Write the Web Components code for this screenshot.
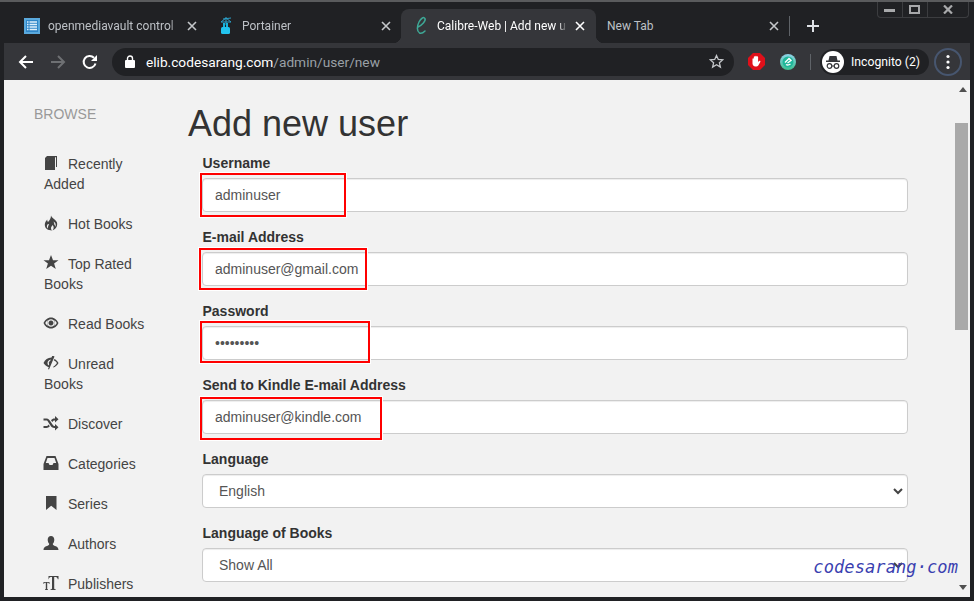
<!DOCTYPE html>
<html>
<head>
<meta charset="utf-8">
<title>Calibre-Web | Add new user</title>
<style>
  html, body { margin: 0; padding: 0; background: #202124; }
  body { width: 974px; height: 601px; overflow: hidden; font-family: "Liberation Sans", Arial, sans-serif; }
</style>
</head>
<body>
<browser-window>
  <browser-tab slot="tabs" title="openmediavault control" icon="omv"></browser-tab>
  <browser-tab slot="tabs" title="Portainer" icon="portainer"></browser-tab>
  <browser-tab slot="tabs" title="Calibre-Web | Add new u" icon="calibre" active></browser-tab>
  <browser-tab slot="tabs" title="New Tab"></browser-tab>

  <side-nav>
    <nav-item icon="book">Recently Added</nav-item>
    <nav-item icon="fire">Hot Books</nav-item>
    <nav-item icon="star">Top Rated Books</nav-item>
    <nav-item icon="eye">Read Books</nav-item>
    <nav-item icon="eyeoff">Unread Books</nav-item>
    <nav-item icon="random">Discover</nav-item>
    <nav-item icon="inbox">Categories</nav-item>
    <nav-item icon="bookmark">Series</nav-item>
    <nav-item icon="user">Authors</nav-item>
    <nav-item icon="textsize">Publishers</nav-item>
  </side-nav>

  <user-form>
    <form-field label="Username" value="adminuser" mark="-2,-5,146,44"></form-field>
    <form-field label="E-mail Address" value="adminuser@gmail.com" mark="-3,-4,168,42"></form-field>
    <form-field label="Password" value="•••••••••" mark="-2,-5,170,42"></form-field>
    <form-field label="Send to Kindle E-mail Address" value="adminuser@kindle.com" mark="-2,-3,182,43"></form-field>
    <form-field label="Language" value="English" select></form-field>
    <form-field label="Language of Books" value="Show All" select></form-field>
  </user-form>
</browser-window>

<script>
const ICONS = {
  book: '<path d="M1 2 3 0h10v11h-1V1.2h-1V14H1z"/>',
  fire: '<path fill-rule="evenodd" d="M7 -.5c.5 2 4 3.500 5.800 6.500 1.200 3.500-.5 7-4.300 8.500 1.300-1.500 1.700-3.500.2-5.500-.7 1-1.700 2-1.700 3.200 0 1 .4 1.800 1 2.300C4 14.500.8 12.500.8 8.800.8 6.500 2 5 3.200 3.500c0 1 .3 2 .8 2.500C5.500 4.500 7 2.500 7 -.5zM4 8C3 9 2.700 10 3 11c.2.700.6 1.200 1 1.500C3.800 11 4.200 9.500 5.200 8.500 4.700 8.500 4.300 8.300 4 8zM9.500 5.500c.5 1 .8 2 .8 3 .7.800 1 1.500 1.200 2.200.3-1.200.2-2.700-.3-3.700-.4-.600-1-1.100-1.700-1.500z"/>',
  star: '<path d="M7 -1l2 5.200h5.500l-4.400 3.300 1.700 5.500L7 9.700 2.200 13l1.700-5.500L-.5 4.200H5z"/>',
  eye: '<path fill-rule="evenodd" d="M7 1.500c3.500 0 6.200 2.500 7.500 5.500-1.300 3-4 5.500-7.500 5.500S.8 10-.5 7C.8 4 3.500 1.500 7 1.500zM7 3.200C5 3.200 3.200 4.800 3.200 7S5 10.800 7 10.800 10.800 9.200 10.800 7 9 3.200 7 3.200zM1.200 7C2 8.300 2.800 9.300 3.800 10 2.800 8 2.800 6 3.800 4 2.800 4.700 2 5.700 1.200 7zM10.200 4c1 2 1 4 0 6 1-.7 1.800-1.700 2.600-3-.8-1.300-1.600-2.300-2.600-3zM7 4.500a2.500 2.500 0 1 1-.01 0z"/>',
  eyeoff: '<path d="M9.500 0l1 .6L5 13.500l-1-.6.8-1.700C2.500 10.300.6 8.800-.5 7 1 4 3.700 1.700 7.500 1.600L8.200 0zM6.800 3.400C5 3.700 3.500 5.200 3.500 7c0 1 .4 1.900 1.100 2.500l.6-1.400C5 7.700 4.800 7.300 4.800 7c0-1 .7-1.800 1.300-2zM10.500 3c1.800.8 3 2.300 4 4-1 1.800-3 4-5.500 4.600l.7-1.400c1.400-.6 2.500-1.900 3.200-3.200-.6-1-1.400-2-3.200-2.800z"/>',
  random: '<path d="M-.5 2.500h3c2 0 3 1.500 4 3l2 3c.6.9 1.200 1.500 2 1.500h.5V8l3.500 3.300L11 14.500V12h-.7c-1.800 0-3-1-4-2.700l-2-3C3.700 5 3.300 4.500 2.500 4.500h-3zM11 0l3.500 3.200L11 6.500V4.500h-.7c-.8 0-1.300.6-2 1.600L7 4.200C8 3 9 2.500 10.300 2.500h.7zM-.5 10h3c.8 0 1.300-.6 2-1.600L5.800 10.300C4.800 11.400 3.800 12 2.500 12h-3z"/>',
  inbox: '<path fill-rule="evenodd" d="M2.500 0h9L14.500 8v6H-.5V8zM3.500 2 1.800 7H4.500l1 2h3l1-2h2.700L10.500 2z"/>',
  bookmark: '<path d="M2 0h10.500v14L7.200 9.800 2 14z"/>',
  user: '<path d="M7 0c2 0 3.300 1.600 3.300 3.800 0 1.500-.5 3-1.500 4 0 1 .5 1.500 1.500 2 2 .7 4 1 4.200 4.200H-.5C-.3 10.800 1.700 10.500 3.700 9.800c1-.5 1.500-1 1.500-2-1-1-1.500-2.500-1.500-4C3.700 1.600 5 0 7 0z"/>',
  textsize: '<path d="M4.500 0h10v3.200h-.8C13.500 2 13 1 11.700 1h-1.500v11.500c0 .5.500.7 1.500.7v.8H6.500v-.8c1 0 1.500-.2 1.500-.7V1H6.800C5.500 1 5 2 4.800 3.200H4.500zM-.5 6h6v2h-.5c-.1-.6-.4-1.200-1-1.200H3.200V13c0 .2.200.3.800.3v.7H1v-.7c.6 0 .8-.1.800-.3V6.800H1c-.6 0-.9.600-1 1.200h-.5z"/>'
};

const FAVICONS = {
  omv: `<svg width="16" height="16" viewBox="0 0 16 16"><rect width="16" height="16" fill="#5aa9dd"/><rect x="2" y="2" width="12" height="12" fill="#2f86c8"/><path d="M3 4h10M3 6.500h10M3 9h10M3 11.500h10" stroke="#dff0fb" stroke-width="1.500"/><path d="M5 3v10" stroke="#2f86c8"/></svg>`,
  portainer: `<svg width="16" height="18" viewBox="0 0 16 18"><path d="M8 0v8M5 2 13 1M3 5 8 1l5 4M3 5h10" stroke="#2b9fc7" stroke-width="1" fill="none"/><rect x="5" y="6" width="2" height="4" fill="#17b3dd"/><rect x="8" y="6" width="2" height="4" fill="#17b3dd"/><rect x="3" y="10" width="9" height="7" rx="1.500" fill="#22c3ee"/></svg>`,
  calibre: `<svg width="16" height="20" viewBox="0 0 16 20"><path d="M5 11C9 9 13 5 12 2.500 11 .5 8 2 6 6c-2 4-2.500 9 .5 11 2 1 4-.5 5.500-2" fill="none" stroke="#3ea896" stroke-width="1.500" stroke-linecap="round"/></svg>`
};

class UiIcon extends HTMLElement {
  constructor() {
    super();
    this.shadowDOM = this.attachShadow({ mode: 'open' });
  }

  connectedCallback() {
    this.shadowDOM.innerHTML = `
      <style>
        :host{ display:inline-block; width:14px; height:14px; margin-right:10px; vertical-align:-1px; }
        svg{ display:block; overflow:visible; fill:#444; }
      </style>
      <svg width="14" height="14" viewBox="0 0 14 14">${ICONS[this.getAttribute('name')]}</svg>`;
  }
}
customElements.define('ui-icon', UiIcon);

class BrowserTab extends HTMLElement {
  constructor() {
    super();
    this.shadowDOM = this.attachShadow({ mode: 'open' });
  }

  connectedCallback() {
    const icon = FAVICONS[this.getAttribute('icon')];
    this.shadowDOM.innerHTML = `
      <style>
        :host{
          display:flex;
          align-items:center;
          box-sizing:border-box;
          flex:0 0 194px;
          min-width:0;
          height:34px;
          padding:0 9px 0 10px;
          position:relative;
          color:#bdc1c6;
          font:12px Roboto, "Noto Sans", sans-serif;
        }
        :host([active]){
          background:#35363a;
          border-radius:8px 8px 0 0;
          color:#fff;
          margin-left:-1px;
          flex-basis:195px;
          padding-left:12px;
        }
        :host([active])::before, :host([active])::after{
          content:"";
          position:absolute;
          bottom:0;
          width:8px;
          height:8px;
        }
        :host([active])::before{ left:-8px; background:radial-gradient(circle at 0 0, transparent 8px, #35363a 8.500px); }
        :host([active])::after{ right:-8px; background:radial-gradient(circle at 100% 0, transparent 8px, #35363a 8.500px); }
        .fav{ flex:0 0 16px; height:16px; margin-right:8px; display:flex; align-items:center; justify-content:center; }
        .fav.none{ display:none; }
        .title{
          flex:1;
          min-width:0;
          white-space:nowrap;
          -webkit-mask-image:linear-gradient(to right, #000 calc(100% - 9px), transparent);
        }
        :host(:not([icon])) .title{ padding-left:1px; -webkit-mask-image:none; }
        .close{ flex:0 0 14px; margin-left:6px; }
      </style>
      <div class="fav ${icon ? '' : 'none'}">${icon || ''}</div>
      <div class="title">${this.getAttribute('title')}</div>
      <svg class="close" width="14" height="14" viewBox="0 0 14 14"><path d="M3 3l8 8M11 3l-8 8" stroke="${this.hasAttribute('active') ? '#fff' : '#c4c7ca'}" stroke-width="1.600"/></svg>`;
  }
}
customElements.define('browser-tab', BrowserTab);

class BrowserWindow extends HTMLElement {
  constructor() {
    super();
    this.shadowDOM = this.attachShadow({ mode: 'open' });
  }

  connectedCallback() {
    this.shadowDOM.innerHTML = `
      <style>
        :host{
          display:flex;
          flex-direction:column;
          width:974px;
          height:601px;
          box-sizing:border-box;
          background:#202124;
          border-top:2px solid #5a5b5d;
          position:relative;
        }
        .strip{ flex:0 0 41px; display:flex; align-items:flex-end; padding-left:14px; position:relative; }
        .sep{ flex:0 0 1px; height:20px; background:#5f6368; margin:0 0 7px -1px; }
        .sep.first{ position:absolute; left:207px; bottom:0; margin:0 0 7px 0; }
        .plus{ margin:0 0 9px 15px; }
        .controls{
          position:absolute;
          top:0;
          right:5px;
          width:92px;
          height:16px;
          display:flex;
          border:1px solid #3c3d40;
          border-top:0;
          border-radius:0 0 4px 4px;
          box-sizing:border-box;
        }
        .controls div{ display:flex; align-items:center; justify-content:center; border-right:1px solid #3c3d40; width:22px; padding-right:2px; }
        .controls div:last-child{ border-right:0; flex:1; padding:0; }
        .toolbar{
          flex:0 0 37px;
          display:flex;
          align-items:center;
          background:#35363a;
          margin:0 4px;
          padding-left:6px;
        }
        .btn{ flex:0 0 32px; height:32px; display:flex; align-items:center; justify-content:center; }
        .omni{
          flex:0 0 622px;
          height:28px;
          box-sizing:border-box;
          margin:0 6px;
          padding:0 10px 0 13px;
          border-radius:14px;
          background:#202124;
          display:flex;
          align-items:center;
          color:#fff;
          font:13.700px Roboto, "Noto Sans", sans-serif;
        }
        .omni .lock{ margin-right:11px; }
        .omni .url{ flex:1; white-space:nowrap; }
        .omni .url span{ color:#9aa0a6; }
        .vsep{ flex:0 0 1px; height:16px; background:#5f6368; margin:0 9px 0 6px; }
        .pill{
          flex:0 0 109px;
          height:26px;
          box-sizing:border-box;
          border-radius:13px;
          background:#202124;
          display:flex;
          align-items:center;
          padding-left:2px;
          color:#fff;
          font:12.200px Roboto, "Noto Sans", sans-serif;
          white-space:nowrap;
        }
        .pill svg{ margin-right:7px; }
        .menu{
          flex:0 0 28px;
          height:28px;
          box-sizing:border-box;
          margin-left:5px;
          border:2px solid #47566f;
          border-radius:50%;
          display:flex;
          align-items:center;
          justify-content:center;
        }
        .page{
          flex:1;
          min-height:0;
          display:flex;
          background:#f2f2f2;
          margin:0 4px 4px 4px;
          position:relative;
          overflow:hidden;
        }
        .bar{ flex:0 0 15px; position:relative; display:flex; flex-direction:column; align-items:center; }
        .up{ margin-top:7px; width:0; height:0; border:4px solid transparent; border-top:0; border-bottom:5px solid #505050; }
        .thumb{ align-self:flex-start; margin-top:31px; width:13px; height:207px; background:#a9a9a9; }
        .down{ margin-top:auto; margin-bottom:7px; width:0; height:0; border:4px solid transparent; border-bottom:0; border-top:5px solid #505050; }
        .mark{
          position:absolute;
          right:12px;
          bottom:20px;
          color:#3a3fb0;
          font:italic 17px "DejaVu Sans Mono", monospace;
          letter-spacing:.1px;
          white-space:nowrap;
        }
      </style>
      <div class="strip">
        <slot name="tabs"></slot>
        <div class="sep first"></div>
        <div class="sep"></div>
        <svg class="plus" width="16" height="16" viewBox="0 0 16 16"><path d="M8 2v12M2 8h12" stroke="#dee1e6" stroke-width="2"/></svg>
        <div class="controls">
          <div><svg width="11" height="4"><rect width="11" height="3" y="1" fill="#a8a9ab"/></svg></div>
          <div><svg width="11" height="9"><rect x="1" y="1" width="9" height="7" fill="none" stroke="#a8a9ab" stroke-width="2"/></svg></div>
          <div><svg width="10" height="9" viewBox="0 0 10 9"><path d="M1 .5l8 8M9 .5l-8 8" stroke="#a8a9ab" stroke-width="2.200"/></svg></div>
        </div>
      </div>
      <div class="toolbar">
        <div class="btn"><svg width="16" height="16" viewBox="0 0 16 16"><path d="M15 8H2M8 2 2 8l6 6" fill="none" stroke="#fff" stroke-width="2"/></svg></div>
        <div class="btn"><svg width="16" height="16" viewBox="0 0 16 16"><path d="M1 8h13M8 2l6 6-6 6" fill="none" stroke="#6e7073" stroke-width="2"/></svg></div>
        <div class="btn"><svg width="16" height="16" viewBox="0 0 16 16"><path d="M13.500 9.500A6 6 0 1 1 12 3.700" fill="none" stroke="#fff" stroke-width="2"/><path d="M15 1v6H9z" fill="#fff"/></svg></div>
        <div class="omni">
          <svg class="lock" width="10" height="13" viewBox="0 0 10 13"><path d="M2.500 5V3.500a2.500 2.500 0 0 1 5 0V5" fill="none" stroke="#fff" stroke-width="1.400"/><rect y="5" width="10" height="8" rx="1" fill="#fff"/></svg>
          <div class="url">elib.codesarang.com<span>/admin/user/new</span></div>
          <svg width="15" height="15" viewBox="0 0 15 15"><path d="M7.500 1.500l1.800 4 4.400.4-3.300 2.900 1 4.300-3.900-2.300-3.900 2.300 1-4.300L1.300 5.900l4.400-.4z" fill="none" stroke="#c4c7ca" stroke-width="1.300"/></svg>
        </div>
        <div class="btn"><svg width="17" height="17" viewBox="0 0 17 17"><path d="M5 0h7l5 5v7l-5 5H5l-5-5V5z" fill="#e0101a"/><path d="M4.500 9V6c0-1 1.300-1 1.300 0V4c0-1 1.400-1 1.400 0v-.5c0-1 1.500-1 1.500 0V4c0-1 1.400-1 1.400 0v5l1-1c.8-.6 1.700.2 1.200 1l-2 3.500c-.5.700-1.200 1-2 1H7.500c-2 0-3-1.500-3-3z" fill="#fff"/></svg></div>
        <div class="btn"><svg width="16" height="16" viewBox="0 0 16 16"><defs><linearGradient id="g" x1="0" y1="0" x2="0" y2="1"><stop offset="0" stop-color="#8fd3e8"/><stop offset="1" stop-color="#3dbf8f"/></linearGradient></defs><circle cx="8" cy="8" r="8" fill="url(#g)"/><circle cx="8" cy="8" r="5.500" fill="#1fb79a"/><path d="M5 8.500 9 4.500l2 2-3.500 2.500M6 10.500c1.500 1 3 .5 4.500-.5" fill="none" stroke="#fff" stroke-width="1.400"/></svg></div>
        <div class="vsep"></div>
        <div class="pill">
          <svg width="22" height="22" viewBox="0 0 22 22"><circle cx="11" cy="11" r="11" fill="#fff"/><path d="M7.500 5h7l1 4.500h2.500V11H4V9.500h2.500z" fill="#35363a"/><circle cx="7.500" cy="15" r="2.300" fill="none" stroke="#35363a" stroke-width="1.200"/><circle cx="14.500" cy="15" r="2.300" fill="none" stroke="#35363a" stroke-width="1.200"/><path d="M9.800 15h2.400" stroke="#35363a"/></svg>
          Incognito (2)
        </div>
        <div class="menu"><svg width="4" height="16" viewBox="0 0 4 16"><circle cx="2" cy="2.500" r="1.600" fill="#fff"/><circle cx="2" cy="8" r="1.600" fill="#fff"/><circle cx="2" cy="13.500" r="1.600" fill="#fff"/></svg></div>
      </div>
      <div class="page">
        <slot></slot>
        <div class="bar"><div class="up"></div><div class="thumb"></div><div class="down"></div></div>
        <div class="mark">codesarang·com</div>
      </div>`;
  }
}
customElements.define('browser-window', BrowserWindow);

class SideNav extends HTMLElement {
  constructor() {
    super();
    this.shadowDOM = this.attachShadow({ mode: 'open' });
  }

  connectedCallback() {
    this.shadowDOM.innerHTML = `
      <style>
        :host{
          display:block;
          flex:0 0 184px;
          box-sizing:border-box;
          padding:24px 0 0 30px;
        }
        h2{
          margin:0 0 30px;
          font:14px/20px "Liberation Sans", Arial, sans-serif;
          color:#999;
        }
        .list{ display:flex; flex-direction:column; gap:20px; margin-left:10px; width:106px; }
      </style>
      <h2>BROWSE</h2>
      <div class="list"><slot></slot></div>`;
  }
}
customElements.define('side-nav', SideNav);

class NavItem extends HTMLElement {
  constructor() {
    super();
    this.shadowDOM = this.attachShadow({ mode: 'open' });
  }

  connectedCallback() {
    this.shadowDOM.innerHTML = `
      <style>
        :host{
          display:block;
          font:14px/20px "Liberation Sans", Arial, sans-serif;
          color:#444;
        }
      </style>
      <ui-icon name="${this.getAttribute('icon')}"></ui-icon><slot></slot>`;
  }
}
customElements.define('nav-item', NavItem);

class UserForm extends HTMLElement {
  constructor() {
    super();
    this.shadowDOM = this.attachShadow({ mode: 'open' });
  }

  connectedCallback() {
    this.shadowDOM.innerHTML = `
      <style>
        :host{
          display:block;
          flex:1;
          min-width:0;
          padding-top:24px;
          font-family:"Liberation Sans", Arial, sans-serif;
          color:#333;
        }
        h1{ margin:0 0 9px; font-size:36px; font-weight:400; line-height:40px; }
        .fields{ margin-left:14px; width:706px; display:flex; flex-direction:column; gap:15px; }
      </style>
      <h1>Add new user</h1>
      <div class="fields"><slot></slot></div>`;
  }
}
customElements.define('user-form', UserForm);

class FormField extends HTMLElement {
  constructor() {
    super();
    this.shadowDOM = this.attachShadow({ mode: 'open' });
  }

  connectedCallback() {
    const isSelect = this.hasAttribute('select');
    const mark = this.getAttribute('mark');
    let markHtml = '';
    if (mark) {
      const [x, y, w, h] = mark.split(',');
      markHtml = `<div class="mark" style="left:${x}px;top:${y}px;width:${w}px;height:${h}px"></div>`;
    }
    this.shadowDOM.innerHTML = `
      <style>
        :host{ display:block; }
        label{ display:block; margin-bottom:5px; padding-left:.5px; font:bold 14px/20px "Liberation Sans", Arial, sans-serif; color:#333; }
        .box{ position:relative; }
        .input{
          box-sizing:border-box;
          height:34px;
          padding:6px 12px;
          background:#fff;
          border:1px solid #ccc;
          border-radius:4px;
          box-shadow:inset 0 1px 1px rgba(0,0,0,.075);
          font:14px/20px "Liberation Sans", Arial, sans-serif;
          color:#555;
          display:flex;
          align-items:center;
          justify-content:space-between;
        }
        .select{ padding-left:16px; padding-right:4px; }
        .mark{
          position:absolute;
          box-sizing:border-box;
          border:2px solid #f00;
          box-shadow:0 0 0 1px #fff;
        }
      </style>
      <label>${this.getAttribute('label')}</label>
      <div class="box">
        <div class="input ${isSelect ? 'select' : ''}">
          <span>${this.getAttribute('value')}</span>
          ${isSelect ? '<svg width="10" height="7" viewBox="0 0 10 7"><path d="M1 1l4 4 4-4" fill="none" stroke="#444" stroke-width="2"/></svg>' : ''}
        </div>
        ${markHtml}
      </div>`;
  }
}
customElements.define('form-field', FormField);
</script>
</body>
</html>
